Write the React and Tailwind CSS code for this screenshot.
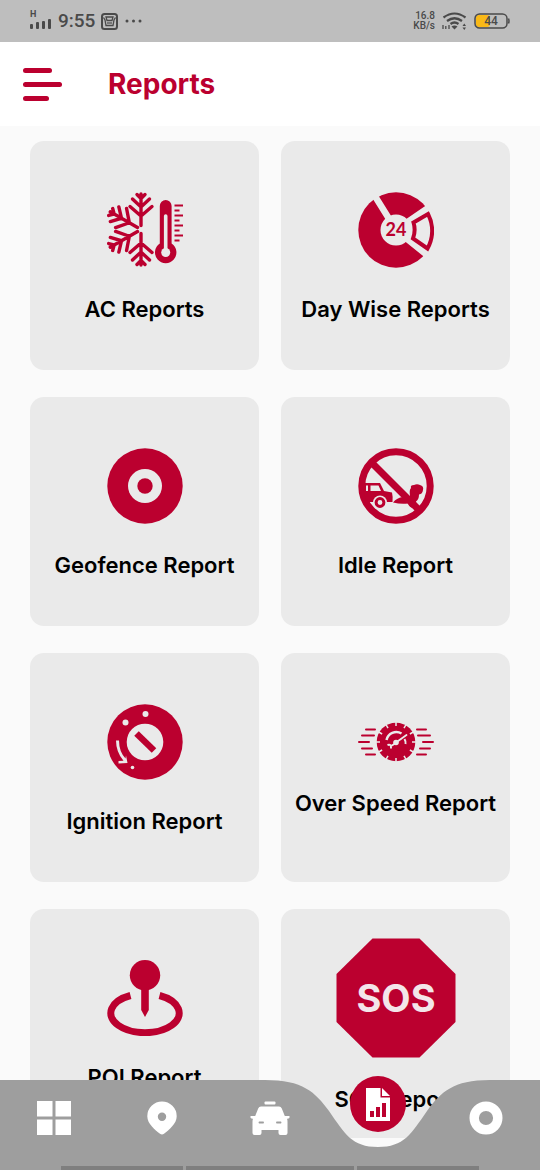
import { useState } from "react";

const RED = "#bb002f";
const CARD = "#eaeaea";

function AcIcon() {
  return (
    <svg width="76" height="76" viewBox="0 0 76 76" fill="none" stroke={RED} aria-hidden="true">
      {[0, -60, -120, 180].map((angle) => (
        <path
          key={angle}
          d="M34 2V33.5M23 14.5L34 24l11-9.5M25.500 7L34 15l8.500-8M30 2.500l4 4 4-4"
          strokeWidth="3.400"
          strokeLinecap="round"
          transform={`rotate(${angle} 34 37.5)`}
        />
      ))}
      <path
        d="M52.800 14a5.900 5.900 0 0 1 11.800 0v37.500a10.700 10.700 0 1 1-11.800 0z"
        fill={RED}
        stroke="none"
      />
      <path d="M58.700 24v36" stroke={CARD} strokeWidth="3.600" strokeLinecap="round" />
      <circle cx="58.700" cy="60.500" r="4.500" fill={CARD} stroke="none" />
      <path
        d="M67.500 13.500H76M67.500 18.500h5M67.500 23.500H76M67.500 28.500h5M67.500 33.500H76M67.500 38.500h5M67.500 43.500H76M67.500 48.500h5"
        strokeWidth="2.200"
      />
    </svg>
  );
}

function DayWiseIcon() {
  return (
    <svg width="76" height="76" viewBox="0 0 76 76" aria-hidden="true">
      <circle cx="38" cy="38" r="37.700" fill={RED} />
      <path d="M38 38L78 13V68z" fill={CARD} />
      <path d="M38 38L15 1M38 38L76 12M38 38L74 67" stroke={CARD} strokeWidth="6.500" />
      <path
        d="M55.500 30.500L70 22a36 36 0 0 1-.5 34.500L55 46.500q3-8 .5-16z"
        fill={CARD}
        stroke={RED}
        strokeWidth="4"
      />
      <circle cx="38" cy="38" r="15.500" fill={CARD} />
      <text
        x="38"
        y="44"
        textAnchor="middle"
        fontSize="18"
        fontWeight="700"
        fontFamily="Lato, sans-serif"
        fill={RED}
      >
        24
      </text>
    </svg>
  );
}

function GeofenceIcon() {
  return (
    <svg width="76" height="76" viewBox="0 0 76 76" aria-hidden="true">
      <circle cx="38" cy="38" r="37.700" fill={RED} />
      <circle cx="38" cy="38" r="17" fill={CARD} />
      <circle cx="38" cy="38" r="7.700" fill={RED} />
    </svg>
  );
}

function IdleIcon() {
  return (
    <svg width="76" height="76" viewBox="0 0 76 76" aria-hidden="true">
      <circle cx="38" cy="38" r="34.200" fill="none" stroke={RED} strokeWidth="7" />
      <path d="M5 35h17l4 8 8 1.500q1 4 .5 9.500H28a6.500 6.500 0 0 0-12.500 0H8z" fill={RED} />
      <path d="M8 37.500h2V43H8zM12.500 37.500h8L23 43H12.500z" fill={CARD} />
      <circle cx="22" cy="54.500" r="7" fill={CARD} />
      <circle cx="22" cy="54.500" r="3.900" fill="none" stroke={RED} strokeWidth="3" />
      {/* exhaust */}
      <path
        d="M35 54.500q4-5 10-5.500l7-1q-1-6 1-8-1-3 3-3 3-1.500 6 0 4 1 3 5-.5 4-4 4.500 0 5-3 7 1 4-2 7-5-1-6-5-7 1-15-1z"
        fill={RED}
      />
      <path d="M13.500 14.500L62 63" stroke={RED} strokeWidth="7" />
    </svg>
  );
}

function IgnitionIcon() {
  return (
    <svg width="76" height="76" viewBox="0 0 76 76" aria-hidden="true">
      <circle cx="38" cy="38" r="37.700" fill={RED} />
      <circle cx="38" cy="38" r="18.300" fill={CARD} />
      <path d="M29.500 29.500L47 46.500" stroke={RED} strokeWidth="6.500" />
      <circle cx="38.500" cy="10" r="3" fill={CARD} />
      <circle cx="18.500" cy="18.500" r="3" fill={CARD} />
      <circle cx="25.500" cy="63.500" r="1.800" fill={CARD} />
      <path d="M9 36.500h3q0 11 6.500 18l.5-3 1.500 7.500-9 .5v-2.500l5-.2Q9 48 9 36.500z" fill={CARD} />
    </svg>
  );
}

function SpeedIcon() {
  const notches = Array.from({ length: 12 }, (_, i) => i * 30);
  return (
    <svg width="76" height="40" viewBox="0 0 76 40" aria-hidden="true">
      <circle cx="38" cy="20" r="19.300" fill={RED} />
      {notches.map((a) => (
        <path key={a} d="M38 0v4" stroke={CARD} strokeWidth="1.500" transform={`rotate(${a} 38 20)`} />
      ))}
      <path
        d="M8 7.500h9M4 13.500h12M1 20h10M4 26.500h10M8 32.500h9M68 7.500h-9M72 13.500H60M75 20H65M72 26.500H62M68 32.500h-9"
        stroke={RED}
        strokeWidth="2"
        strokeLinecap="round"
      />
      <path d="M28.500 18a10 10 0 0 1 15-6.500" fill="none" stroke={CARD} strokeWidth="2.500" />
      <path d="M38 20.500L48.500 13" stroke={CARD} strokeWidth="1.800" strokeLinecap="round" />
      <path d="M46.500 17q1.500 2.500 1 5" fill="none" stroke={CARD} strokeWidth="2" />
      <circle cx="38" cy="20.500" r="2.800" fill={CARD} />
      <path d="M38 21l-5 3M29.500 23q4-1.500 3.500 3.500" fill="none" stroke={CARD} strokeWidth="2" />
    </svg>
  );
}

function PoiIcon() {
  return (
    <svg width="76" height="76" viewBox="0 0 76 76" aria-hidden="true">
      <circle cx="38" cy="15.300" r="15.200" fill={RED} />
      <path d="M34.200 28h7.600v22L38 57l-3.800-7z" fill={RED} />
      <path d="M23.500 35.500A34.200 19.500 0 1 0 52.500 35.500" fill="none" stroke={RED} strokeWidth="7" />
    </svg>
  );
}

function SosIcon() {
  return (
    <svg width="120" height="120" viewBox="0 0 120 120" aria-hidden="true">
      <path d="M36.500.5h47l36 35.500v48l-36 35.500h-47L.5 84V36z" fill={RED} />
      <text
        x="60"
        y="74"
        textAnchor="middle"
        fontSize="38"
        fontWeight="700"
        fontFamily="Inter, sans-serif"
        fill="#f3e6ea"
      >
        SOS
      </text>
    </svg>
  );
}

const reports = [
  { title: "AC Reports", Icon: AcIcon },
  { title: "Day Wise Reports", Icon: DayWiseIcon },
  { title: "Geofence Report", Icon: GeofenceIcon },
  { title: "Idle Report", Icon: IdleIcon },
  { title: "Ignition Report", Icon: IgnitionIcon },
  { title: "Over Speed Report", Icon: SpeedIcon },
  { title: "POI Report", Icon: PoiIcon },
  { title: "SOS Report", Icon: SosIcon },
];

function StatusBar() {
  return (
    <div className="flex h-[42px] shrink-0 items-center justify-between bg-[#bebebe] px-[30px] font-[Roboto,sans-serif] text-[#4a4a4a]">
      <div className="flex items-center gap-[6px]">
        <div className="flex flex-col pb-1">
          <span className="text-[9px] leading-[10px] font-bold">H</span>
          <svg width="22" height="10" viewBox="0 0 22 10" fill="currentColor" aria-hidden="true">
            <rect x="0" y="5" width="3" height="5" rx="1" />
            <rect x="6" y="3" width="3" height="7" rx="1" />
            <rect x="12" y="2" width="3" height="8" rx="1" />
            <rect x="18" y="0" width="3" height="10" rx="1" />
          </svg>
        </div>
        <span className="text-[19px] leading-6 font-medium">9:55</span>
        <svg width="17" height="17" viewBox="0 0 17 17" fill="none" stroke="currentColor" aria-hidden="true">
          <rect x="1" y="1" width="15" height="15" rx="2.500" strokeWidth="2" />
          <path d="M2.500 4.500L4 7l1 5.500h7L13 7l1.500-2.500M5 4h7l-1 3.500H6z" strokeWidth="1.300" />
          <path d="M6 10h5" strokeWidth="1.200" />
        </svg>
        <svg width="18" height="4" viewBox="0 0 18 4" fill="currentColor" aria-hidden="true">
          <circle cx="3" cy="2" r="1.500" />
          <circle cx="9.500" cy="2" r="1.500" />
          <circle cx="16" cy="2" r="1.500" />
        </svg>
      </div>
      <div className="flex items-center gap-[7px]">
        <div className="flex flex-col items-end text-[10px] leading-[10px] font-medium">
          <span>16.8</span>
          <span>KB/s</span>
        </div>
        <svg width="25" height="18" viewBox="0 0 25 18" fill="none" stroke="currentColor" aria-hidden="true">
          <path d="M1.500 5.500q11-8 22 0M5 9q7.500-5.500 15 0M8.500 12q4-3 8 0" strokeWidth="2.200" />
          <path d="M9.500 14.500q3-2 6 0l-3 3z" fill="currentColor" stroke="none" />
          <path d="M1 13v4M3.800 14v3M7 13v4" strokeWidth="1.300" />
          <path d="M20.500 14l1.800-2.500L24 14zM20.500 15.500l1.800 2.500L24 15.500z" fill="currentColor" stroke="none" />
        </svg>
        <svg width="36" height="16" viewBox="0 0 36 16" aria-hidden="true">
          <rect x="2" y="2" width="14" height="12" rx="3" fill="#f9b916" />
          <rect x="1" y="1" width="32" height="14" rx="4.500" fill="none" stroke="#4a4a4a" strokeWidth="1.500" />
          <path d="M34.500 5.500q1 2.500 0 5" fill="none" stroke="#4a4a4a" strokeWidth="1.500" />
          <text x="17" y="12" textAnchor="middle" fontSize="12" fontWeight="500" fontFamily="Roboto, sans-serif" fill="#4a4a4a">
            44
          </text>
        </svg>
      </div>
    </div>
  );
}

function ReportCard({ title, Icon }) {
  return (
    <a
      href="#"
      className="flex aspect-square flex-col items-center justify-center gap-[27px] rounded-[14px] bg-[#eaeaea] pt-1"
    >
      <Icon />
      <span className="text-[22px] leading-7 font-semibold whitespace-nowrap text-black">
        {title}
      </span>
    </a>
  );
}

function BottomNav({ active, onSelect }) {
  const item = "grid h-[75px] place-items-center text-white";
  return (
    <nav className="fixed inset-x-0 bottom-0 h-[90px]">
      <svg
        className="absolute inset-0 h-full w-full"
        viewBox="0 0 540 90"
        preserveAspectRatio="none"
        aria-hidden="true"
      >
        <path
          d="M0 0H265C303 0 315 12 329 31C345 54 352 67 378 67C404 67 411 54 427 31C441 12 453 0 490 0H540V90H0z"
          fill="#9e9e9e"
        />
      </svg>
      <div className="relative flex h-full flex-col justify-between">
        <div className="grid grid-cols-5">
          <button type="button" aria-label="Dashboard" className={item} onClick={() => onSelect("dashboard")}>
            <svg width="34" height="34" viewBox="0 0 34 34" fill="currentColor">
              <path d="M0 0h15.500v15.500H0zM18.500 0H34v15.500H18.500zM0 18.500h15.500V34H0zM18.500 18.500H34V34H18.500z" />
            </svg>
          </button>
          <button type="button" aria-label="Map" className={item} onClick={() => onSelect("map")}>
            <svg width="30" height="34" viewBox="0 0 30 34" fill="currentColor">
              <path
                fillRule="evenodd"
                d="M15 .5A14.700 14.700 0 0 0 .3 15.200C.3 23 8 28.500 13 32.800q2 1.600 4 0C22 28.500 29.700 23 29.700 15.200A14.700 14.700 0 0 0 15 .5zm0 11a4.200 4.200 0 1 1 0 8.400 4.200 4.200 0 0 1 0-8.400z"
              />
            </svg>
          </button>
          <button type="button" aria-label="Vehicles" className={item} onClick={() => onSelect("vehicles")}>
            <svg width="40" height="34" viewBox="0 0 40 34" fill="currentColor">
              <rect x="14.500" y="0.500" width="11" height="3" rx="1" />
              <path
                fillRule="evenodd"
                d="M11 5.500h18q2 0 2.800 2l3 7.500h4q1 0 .9 1-.2 1.500-2 1.700l-.7.100q.5 1 .5 3V32q0 2-2 2h-5q-2 0-2-2v-3h-17v3q0 2-2 2h-5q-2 0-2-2V20.800q0-2 .5-3l-.7-.1Q.5 17.500.3 16q0-1 .9-1h4l3-7.500q.8-2 2.800-2zM9 20.500q-1 1 0 2h4.500q1-1 0-2zm17.500 0q-1 1 0 2H31q1-1 0-2z"
              />
            </svg>
          </button>
          <button
            type="button"
            aria-label="Reports"
            aria-current={active === "reports" ? "page" : undefined}
            className="-mt-1 grid size-14 place-items-center justify-self-center rounded-full bg-[#bb002f] text-white"
            onClick={() => onSelect("reports")}
          >
            <svg width="24" height="33" viewBox="0 0 24 33">
              <path d="M0 0h14.500v9.500H24V33H0z" fill="currentColor" />
              <path d="M16 0l8 8h-8z" fill="currentColor" />
              <path d="M4 23h4v6H4zM10 19h4v10h-4zM16 15h4v14h-4z" fill={RED} />
            </svg>
          </button>
          <button type="button" aria-label="Settings" className={item} onClick={() => onSelect("settings")}>
            <svg width="34" height="34" viewBox="0 0 34 34" fill="none" stroke="currentColor">
              <circle cx="17" cy="17" r="11.800" strokeWidth="9.400" />
            </svg>
          </button>
        </div>
        <div className="flex justify-center gap-[3px]">
          <span className="h-1 w-[122px] bg-[#7f7f7f]" />
          <span className="h-1 w-[168px] bg-[#7f7f7f]" />
          <span className="h-1 w-[122px] bg-[#7f7f7f]" />
        </div>
      </div>
    </nav>
  );
}

export default function App() {
  const [active, setActive] = useState("reports");

  return (
    <div className="flex h-screen flex-col bg-[#fafafa] font-[Inter,sans-serif]">
      <StatusBar />
      <header className="flex h-[84px] shrink-0 items-center gap-[46px] bg-white px-[23px]">
        <button type="button" aria-label="Open menu" className="flex w-[39px] flex-col gap-[9px]">
          <span className="h-[5px] w-[29px] rounded-full bg-[#bb002f]" />
          <span className="h-[5px] w-full rounded-full bg-[#bb002f]" />
          <span className="h-[5px] w-[26px] rounded-full bg-[#bb002f]" />
        </button>
        <h1 className="text-[28px] leading-8 font-bold text-[#bb002f]">Reports</h1>
      </header>

      <main className="grid flex-1 grid-cols-2 content-start gap-x-[22px] gap-y-[27px] overflow-y-auto px-[30px] pt-[15px] pb-8 [scrollbar-width:none]">
        {reports.map((r) => (
          <ReportCard key={r.title} title={r.title} Icon={r.Icon} />
        ))}
      </main>

      <BottomNav active={active} onSelect={setActive} />
    </div>
  );
}
